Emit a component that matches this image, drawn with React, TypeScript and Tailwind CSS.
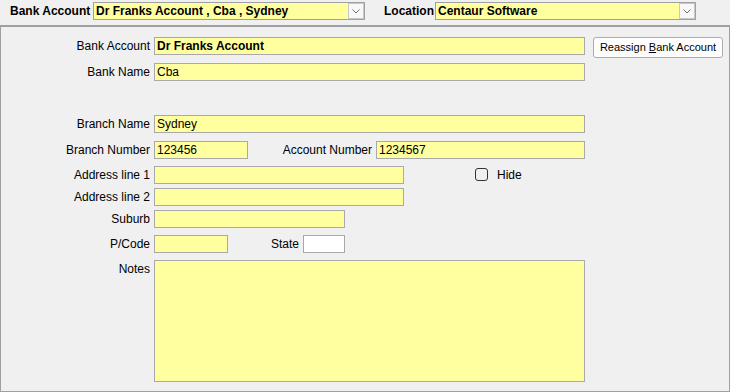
import React from "react";

const font = { fontFamily: '"Liberation Sans", Arial, sans-serif' };

function Combo({ width, text }: { width: number; text: string }) {
  return (
    <div
      className="flex h-[18px] border border-[#a0a0a0] bg-[#ffffa0]"
      style={{ width }}
    >
      <div className="flex-1 pl-[2px] text-[12px] font-bold leading-[16px] text-black">
        {text}
      </div>
      <div className="flex h-[16px] w-[16px] items-center justify-center border border-[#c8c8c8] bg-[#f8f8f8]">
        <svg width="8" height="5" viewBox="0 0 8 5">
          <path d="M0.5 0.5 L4 4 L7.5 0.5" fill="none" stroke="#707070" strokeWidth="1" />
        </svg>
      </div>
    </div>
  );
}

function Input({
  width,
  text,
  bold,
  white,
  height = 18,
}: {
  width: number;
  text?: string;
  bold?: boolean;
  white?: boolean;
  height?: number;
}) {
  return (
    <div
      className={`border border-[#a9a9a9] pl-[2px] text-[12px] leading-[16px] text-black ${
        white ? "bg-white" : "bg-[#ffffa0]"
      } ${bold ? "font-bold" : ""}`}
      style={{ width, height }}
    >
      {text}
    </div>
  );
}

function Label({ children, w = 149 }: { children: React.ReactNode; w?: number }) {
  return (
    <div
      className="shrink-0 pr-[4px] text-right text-[12px] leading-[18px] text-black"
      style={{ width: w + 4 }}
    >
      {children}
    </div>
  );
}

export default function App() {
  return (
    <div className="h-[392px] w-[730px] overflow-hidden bg-[#f0f0f0]" style={font}>
      {/* top bar */}
      <div className="flex h-[27px] items-start border-b-2 border-[#a0a0a0] pt-[2px]">
        <div className="ml-[10px] w-[83px] text-[12px] font-bold leading-[18px] text-black">
          Bank Account
        </div>
        <Combo width={272} text="Dr Franks Account , Cba , Sydney" />
        <div className="ml-[19px] w-[51px] text-[12px] font-bold leading-[18px] text-black">
          Location
        </div>
        <Combo width={261} text="Centaur Software" />
      </div>

      {/* panel */}
      <div className="flex h-[365px] flex-col border-x border-b border-[#a0a0a0]">
        <div className="mt-[10px] flex h-[18px] items-start">
          <Label>Bank Account</Label>
          <Input width={431} text="Dr Franks Account" bold />
          <button className="ml-[8px] h-[21px] w-[130px] rounded-[3px] border border-[#adadad] bg-[#fdfdfd] text-[11px] leading-[19px] text-black">
            Reassign <span className="underline">B</span>ank Account
          </button>
        </div>
        <div className="mt-[8px] flex h-[18px] items-start">
          <Label>Bank Name</Label>
          <Input width={431} text="Cba" />
        </div>
        <div className="mt-[34px] flex h-[18px] items-start">
          <Label>Branch Name</Label>
          <Input width={431} text="Sydney" />
        </div>
        <div className="mt-[8px] flex h-[18px] items-start">
          <Label>Branch Number</Label>
          <Input width={94} text="123456" />
          <Label w={124}>Account Number</Label>
          <Input width={209} text="1234567" />
        </div>
        <div className="mt-[7px] flex h-[18px] items-start">
          <Label>Address line 1</Label>
          <Input width={250} />
          <div className="ml-[71px] mt-[2px] h-[13px] w-[13px] rounded-[3px] border border-[#333333] bg-[#f0f0f0]" />
          <div className="ml-[9px] text-[12px] leading-[18px] text-black">Hide</div>
        </div>
        <div className="mt-[4px] flex h-[18px] items-start">
          <Label>Address line 2</Label>
          <Input width={250} />
        </div>
        <div className="mt-[4px] flex h-[18px] items-start">
          <Label>Suburb</Label>
          <Input width={191} />
        </div>
        <div className="mt-[7px] flex h-[18px] items-start">
          <Label>P/Code</Label>
          <Input width={74} />
          <Label w={71}>State</Label>
          <Input width={42} white />
        </div>
        <div className="mt-[7px] flex items-start">
          <Label>Notes</Label>
          <Input width={431} height={122} />
        </div>
      </div>
    </div>
  );
}
